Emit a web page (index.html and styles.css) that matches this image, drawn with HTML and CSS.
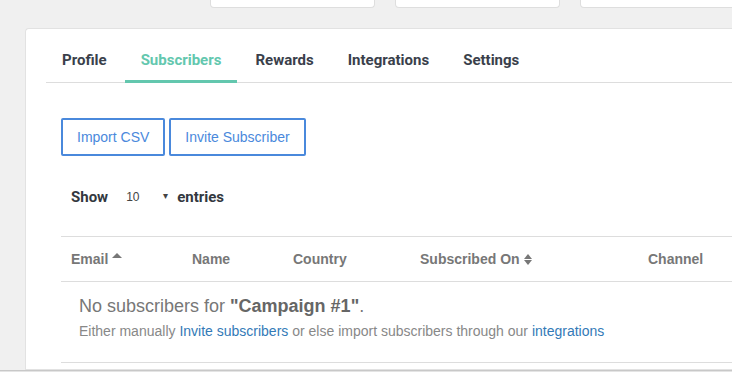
FILE: index.html
```html
<!DOCTYPE html>
<html lang="en">
<head>
    <meta charset="UTF-8">
    <meta name="viewport" content="width=device-width, initial-scale=1.0">
    <title>Campaign Subscribers</title>
    <link rel="stylesheet" href="styles.css">
</head>
<body>
    <div class="stat-row">
        <div class="stat-card"></div>
        <div class="stat-card"></div>
        <div class="stat-card"></div>
    </div>

    <div class="panel">
        <ul class="tabs">
            <li class="tab">Profile</li>
            <li class="tab active">Subscribers</li>
            <li class="tab">Rewards</li>
            <li class="tab">Integrations</li>
            <li class="tab">Settings</li>
        </ul>

        <div class="tab-content">
            <div class="actions">
                <button class="btn-outline">Import CSV</button>
                <button class="btn-outline">Invite Subscriber</button>
            </div>

            <div class="length-row">
                <span class="length-label">Show</span>
                <span class="length-select">10 <span class="caret">&#9662;</span></span>
                <span class="length-label">entries</span>
            </div>

            <div class="table">
                <div class="table-head">
                    <div class="th">Email <span class="sort-up"></span></div>
                    <div class="th">Name</div>
                    <div class="th">Country</div>
                    <div class="th">Subscribed On <span class="sort-both"><i class="up"></i><i class="down"></i></span></div>
                    <div class="th">Channel</div>
                </div>
                <div class="empty-row">
                    <p class="empty-title">No subscribers for <strong>"Campaign #1"</strong>.</p>
                    <p class="empty-text">Either manually <a href="#">Invite subscribers</a> or else import subscribers through our <a href="#">integrations</a></p>
                </div>
            </div>
        </div>
    </div>

    <div class="bottom-bar"></div>
</body>
</html>
```

FILE: styles.css
```css
body {
    margin: 0;
    padding: 0;
    background-color: #f0f0f0;
    font-family: "Liberation Sans", Arial, sans-serif;
    overflow: hidden;
    height: 372px;
}

.stat-row {
    display: flex;
    gap: 20px;
    padding-left: 210px;
    height: 8px;
}

.stat-card {
    flex: 0 0 163px;
    height: 7px;
    background: white;
    border: 1px solid #dedede;
    border-top: none;
    border-radius: 0 0 4px 4px;
}

.panel {
    margin: 20px 0 0 25px;
    height: 342px;
    background: white;
    border: 1px solid #e2e2e2;
    border-right: none;
    border-radius: 4px 0 0 0;
    padding: 20px 0 0 20px;
    box-sizing: border-box;
}

.tabs {
    list-style: none;
    margin: 0;
    padding: 0;
    display: flex;
    border-bottom: 1px solid #dddddd;
    font-family: Roboto, "Liberation Sans", sans-serif;
}

.tab {
    padding: 0 16px;
    margin-right: 2px;
    height: 31px;
    line-height: 22px;
    font-size: 15px;
    font-weight: 700;
    color: #3a3f4b;
    border-bottom: 3px solid transparent;
    margin-bottom: -1px;
}

.tab.active {
    color: #63c7ae;
    border-bottom-color: #63c7ae;
}

.tab-content {
    padding: 35px 0 0 15px;
}

.actions {
    display: flex;
    gap: 4px;
}

.btn-outline {
    height: 38px;
    padding: 0 14px;
    background: white;
    border: 2px solid #4a89dc;
    border-radius: 2px;
    color: #4a89dc;
    font-family: "Liberation Sans", Arial, sans-serif;
    font-size: 14px;
}

.length-row {
    display: flex;
    align-items: center;
    height: 20px;
    margin-top: 31px;
    padding-left: 10px;
}

.length-label {
    font-family: Roboto, "Liberation Sans", sans-serif;
    font-weight: 700;
    font-size: 15px;
    color: #333840;
}

.length-select {
    width: 51px;
    padding-left: 18px;
    font-size: 12px;
    color: #444;
}

.caret {
    float: right;
    margin-right: 9px;
    font-size: 10px;
    color: #444;
}

.table {
    margin-top: 29px;
    border-top: 1px solid #dddddd;
}

.table-head {
    display: grid;
    grid-template-columns: 121px 101px 127px 228px 1fr;
    height: 44px;
    align-items: center;
    border-bottom: 1px solid #dddddd;
}

.th {
    padding-left: 10px;
    font-size: 14px;
    font-weight: 700;
    color: #777;
    white-space: nowrap;
    display: flex;
    align-items: center;
    gap: 4px;
}

.sort-up {
    width: 0;
    height: 0;
    border-left: 5px solid transparent;
    border-right: 5px solid transparent;
    border-bottom: 5px solid #777;
    margin-top: -8px;
}

.sort-both {
    display: inline-flex;
    flex-direction: column;
    gap: 1px;
}

.sort-both i {
    width: 0;
    height: 0;
    border-left: 4.5px solid transparent;
    border-right: 4.5px solid transparent;
}

.sort-both .up {
    border-bottom: 5px solid #777;
}

.sort-both .down {
    border-top: 5px solid #777;
}

.empty-row {
    padding: 13px 18px 0;
    height: 67px;
    border-bottom: 1px solid #dddddd;
}

.empty-title {
    margin: 0;
    font-size: 18px;
    line-height: 22px;
    color: #777;
}

.empty-title strong {
    color: #666;
}

.empty-text {
    margin: 5px 0 0;
    font-size: 14px;
    line-height: 18px;
    color: #888;
}

.empty-text a {
    color: #337ab7;
    text-decoration: none;
}

.bottom-bar {
    height: 3px;
    background: #e4e4e4;
    border-top: 1px solid #c8c8c8;
}
```
